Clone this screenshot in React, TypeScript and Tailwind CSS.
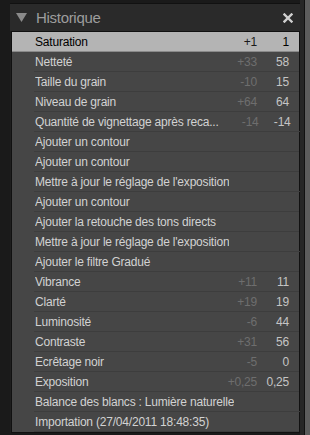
import React from "react";

const rows: { label: string; delta?: string; value?: string }[] = [
  { label: "Saturation", delta: "+1", value: "1" },
  { label: "Netteté", delta: "+33", value: "58" },
  { label: "Taille du grain", delta: "-10", value: "15" },
  { label: "Niveau de grain", delta: "+64", value: "64" },
  { label: "Quantité de vignettage après reca...", delta: "-14", value: "-14" },
  { label: "Ajouter un contour" },
  { label: "Ajouter un contour" },
  { label: "Mettre à jour le réglage de l'exposition" },
  { label: "Ajouter un contour" },
  { label: "Ajouter la retouche des tons directs" },
  { label: "Mettre à jour le réglage de l'exposition" },
  { label: "Ajouter le filtre Gradué" },
  { label: "Vibrance", delta: "+11", value: "11" },
  { label: "Clarté", delta: "+19", value: "19" },
  { label: "Luminosité", delta: "-6", value: "44" },
  { label: "Contraste", delta: "+31", value: "56" },
  { label: "Ecrêtage noir", delta: "-5", value: "0" },
  { label: "Exposition", delta: "+0,25", value: "0,25" },
  { label: "Balance des blancs : Lumière naturelle" },
  { label: "Importation (27/04/2011 18:48:35)" },
];

export default function App() {
  return (
    <div
      className="w-[310px] h-[435px] bg-[#1e1e1e] flex overflow-hidden"
      style={{ fontFamily: '"Liberation Sans", Arial, sans-serif' }}
    >
      <div className="w-[10px] bg-[#1a1a1a]" />
      <div className="w-[290px] flex flex-col">
        <div className="h-[4px] bg-[#1a1a1a] border-b border-[#111]" />
        <div className="h-[27px] bg-[#2a2a2a] flex items-center pl-[6px] pr-[6px]">
          <svg width="11" height="10" viewBox="0 0 11 10" className="mt-[1px]">
            <polygon points="0,0 11,0 5.5,9" fill="#8a8a8a" />
          </svg>
          <span className="ml-[9px] text-[15px] tracking-[-0.3px] text-[#9d9d9d] leading-none">
            Historique
          </span>
          <div className="flex-1" />
          <svg width="10" height="10" viewBox="0 0 10 10" className="mr-[1px] mt-[1px]">
            <path d="M1.5 1.5 L8.5 8.5 M8.5 1.5 L1.5 8.5" stroke="#d0d0d0" strokeWidth="2.4" strokeLinecap="square" />
          </svg>
        </div>
        <div className="border border-[#111] bg-[#464646] flex-1 ml-[1px]">
          {rows.map((r, i) => {
            const sel = i === 0;
            return (
              <div
                key={i}
                className={
                  "h-[20px] flex items-center text-[12px] tracking-[-0.2px] " +
                  (sel ? "bg-[#b4b4b4] border-b border-[#8a8a8a]" : "")
                }
              >
                <div
                  className={
                    "flex-1 h-full flex items-center ml-[22px] pl-[1px] " +
                    (sel ? "" : "border-b border-[#3d3d3d]")
                  }
                >
                  <span className={"flex-1 truncate " + (sel ? "text-black" : "text-[#d2d2d2]")}>
                    {r.label}
                  </span>
                  <span
                    className={
                      "w-[40px] text-right " + (sel ? "text-[#1a1a1a]" : "text-[#6e6e6e]")
                    }
                  >
                    {r.delta ?? ""}
                  </span>
                  <span
                    className={
                      "w-[42px] text-right pr-[10px] " + (sel ? "text-black" : "text-[#c4c4c4]")
                    }
                  >
                    {r.value ?? ""}
                  </span>
                </div>
              </div>
            );
          })}
        </div>
        <div className="h-[2px] bg-[#1a1a1a]" />
      </div>
      <div className="w-[4px] bg-[#262626]" />
      <div className="w-[1px] bg-[#111]" />
      <div className="w-[5px] bg-[#5c5c5c]" />
    </div>
  );
}
